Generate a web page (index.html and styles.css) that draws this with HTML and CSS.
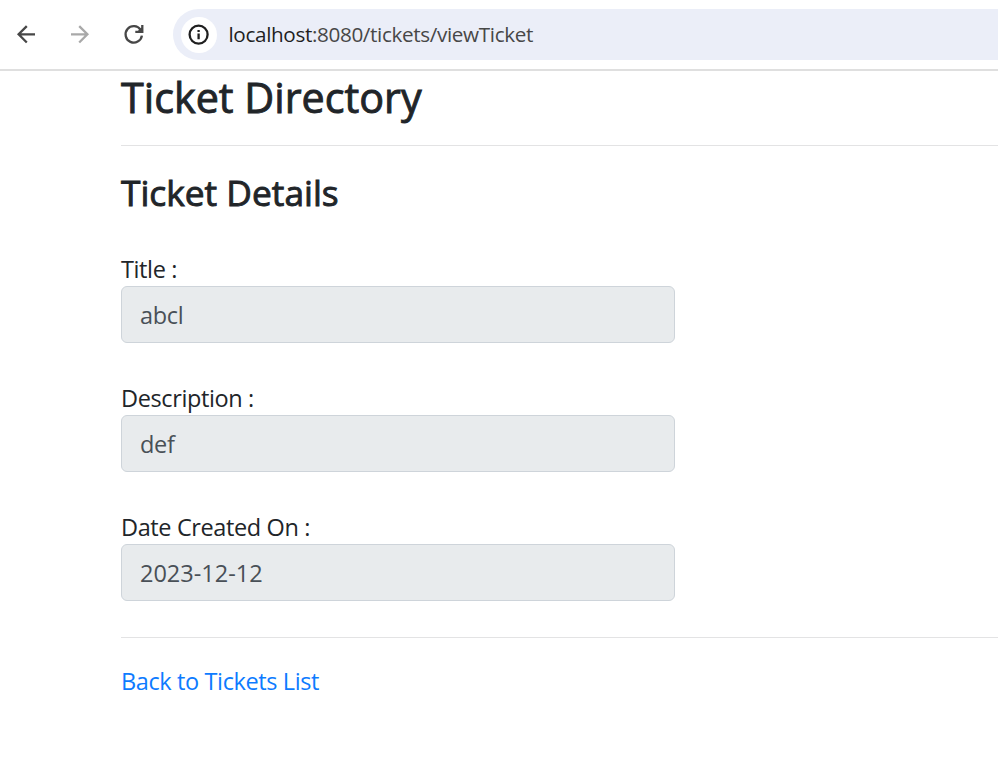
FILE: index.html
```
<!DOCTYPE html>
<html lang="en">
<head>
<meta charset="utf-8">
<title>Ticket Directory</title>
<link rel="stylesheet" href="styles.css">
</head>
<body>
<header class="toolbar">
  <svg class="nav" width="160" height="40" viewBox="0 0 160 40" fill="none" stroke="#474747" stroke-width="2.3">
    <path d="M35 20.3H18.5M26.8 12.1L18.6 20.3L26.8 28.5"/>
    <path stroke="#a9a9a9" d="M71 20.3H87.5M79.2 12.1L87.4 20.3L79.2 28.5"/>
    <path d="M140.6 15.8A8.2 8.2 0 1 0 141.9 21.6M142.3 11V17.9H135.3M138.5 17.8L142.2 14.2"/>
  </svg>
  <div class="address">
    <span class="info"><svg width="22" height="22" viewBox="0 0 22 22" fill="none" stroke="#1f1f1f" stroke-width="2.3"><circle cx="10.6" cy="10.6" r="9"/><path d="M10.6 9.6V15.2M10.6 5.9V8"/></svg></span>
    <span class="url"><span class="host">localhost</span>:8080/tickets/viewTicket</span>
  </div>
</header>
<main>
  <h1>Ticket Directory</h1>
  <hr>
  <h2>Ticket Details</h2>
  <div class="field"><label for="title">Title :</label><input id="title" value="abcl" readonly></div>
  <div class="field"><label for="desc">Description :</label><input id="desc" value="def" readonly></div>
  <div class="field"><label for="date">Date Created On :</label><input id="date" class="date" value="2023-12-12" readonly></div>
  <hr>
  <a href="#">Back to Tickets List</a>
</main>
</body>
</html>
```
FILE: styles.css
```
* { box-sizing: border-box; }
body { margin: 0; background: #fff; color: #212529; font: 23.5px/35px "Open Sans", "Noto Sans", sans-serif; letter-spacing: -0.38px; overflow: hidden; }
.toolbar { height: 71px; border-bottom: 2px solid #dfdfdf; display: flex; padding-top: 9px; }
.nav { flex: none; margin: 5px 13px 0 0; }
.address { flex: 1; height: 51px; border-radius: 26px 0 0 26px; background: #ebeef8; display: flex; align-items: center; padding-left: 7.5px; }
.info { width: 36px; height: 36px; border-radius: 50%; background: #fff; display: flex; align-items: center; justify-content: center; margin-right: 12px; }
.url { font-size: 20.7px; line-height: 30px; letter-spacing: -0.36px; color: #474747; padding-bottom: 2px; }
.host { color: #1f1f1f; }
main { padding: 1px 0 0 121px; }
h1, h2 { margin: 0; font-weight: 400; -webkit-text-stroke: 0.9px #212529; }
h1 { font-size: 41.3px; line-height: 50px; letter-spacing: 0; }
h2 { font-size: 35.3px; line-height: 43px; letter-spacing: 0; margin-bottom: 37px; }
hr { margin: 23px 0 25px; border: 0; border-top: 1px solid #e3e3e4; }
.field { width: 554px; margin-bottom: 37px; }
label { display: block; height: 35px; line-height: 37px; white-space: nowrap; }
input { display: block; width: 554px; height: 57px; border: 1px solid #ced4da; border-radius: 6px; background: #e8ebed; color: #495057; font: inherit; letter-spacing: -0.3px; padding: 0 18px; }
.date { letter-spacing: 0; }
.field + hr { margin-top: -1px; }
a { display: block; line-height: 37px; color: #0d7bff; text-decoration: none; }
```
